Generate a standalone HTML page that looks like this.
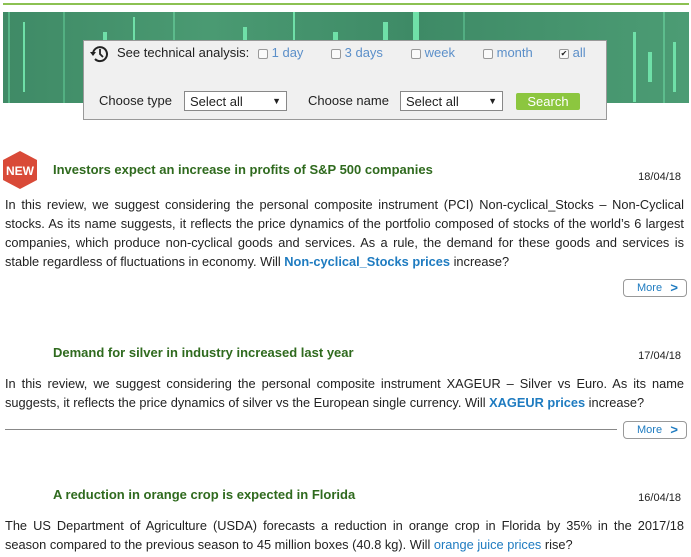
<!DOCTYPE html><html><head><style>
body{margin:0;width:691px;height:557px;background:#fff;font-family:"Liberation Sans",sans-serif;position:relative;overflow:hidden;color:#222}
.a{position:absolute}
.ban{left:3px;top:12px;width:686px;height:91px;background:linear-gradient(90deg,#3f8a66,#4a9a72 30%,#3e8a66 60%,#4c9c74);overflow:hidden}
.ban i{position:absolute;background:#6fe0a8;width:2px}
.panel{left:83px;top:40px;width:524px;height:80px;background:#f0f0f0;border:1px solid #999;box-sizing:border-box;font-size:13px}
.cb{display:inline-block;width:8px;height:8px;border:1px solid #999;background:#fafafa;border-radius:2px;vertical-align:middle}
.lk{color:#5b8fc9}
.sel{position:absolute;top:50px;width:103px;height:20px;border:1px solid #888;background:#fff;box-sizing:border-box;font-size:13px;padding:2px 5px}
.sel:after{content:"▼";position:absolute;right:5px;top:4px;font-size:9px}
.h{font-size:13px;font-weight:bold;color:#2f6a1e;left:53px}
.d{font-size:11px;right:10px}
.p{left:5px;width:679px;font-size:12.8px;line-height:19px}
.p div{text-align:justify;text-align-last:justify;white-space:nowrap}
.p div:last-child{text-align-last:left}
.p b{color:#1e7bc0}
.more{width:64px;height:18px;border:1px solid #999;border-radius:4px;box-sizing:border-box;font-size:11px;color:#1e7bc0;padding:2px 0 0 13px;left:623px}
.more span{position:absolute;right:8px;top:0px;font-weight:bold;font-size:13px}
</style></head><body>
<div class="a" style="left:3px;top:3px;width:686px;height:2px;background:#8cc152"></div>
<div class="a ban">
<i style="left:5px;top:0;height:91px;opacity:.5"></i><i style="left:20px;top:10px;height:70px"></i><i style="left:60px;top:0;height:91px;opacity:.4"></i><i style="left:100px;top:20px;height:50px;width:4px"></i><i style="left:130px;top:5px;height:40px"></i><i style="left:170px;top:0;height:91px;opacity:.5"></i><i style="left:240px;top:15px;height:40px;width:4px"></i><i style="left:290px;top:0;height:60px"></i><i style="left:330px;top:20px;height:30px;width:5px"></i><i style="left:380px;top:10px;height:40px;width:5px"></i><i style="left:410px;top:0;height:30px;width:6px"></i><i style="left:460px;top:0;height:91px;opacity:.4"></i><i style="left:630px;top:20px;height:70px;width:3px"></i><i style="left:660px;top:0;height:91px;opacity:.5"></i><i style="left:645px;top:40px;height:30px;width:4px"></i><i style="left:670px;top:30px;height:50px;width:3px"></i>
</div>
<div class="a panel">
<svg class="a" style="left:5px;top:3px" width="20" height="20" viewBox="0 0 20 20"><path d="M4 10a7 7 0 1 1 2 5" fill="none" stroke="#222" stroke-width="2"/><path d="M1 8l3 4 3-4z" fill="#222"/><path d="M11 5v5l3 3" fill="none" stroke="#222" stroke-width="1.8"/></svg>
<span class="a" style="left:33px;top:4px">See technical analysis:</span>
<span class="a" style="left:174px;top:4px"><span class="cb"></span> <span class="lk">1 day</span></span>
<span class="a" style="left:247px;top:4px"><span class="cb"></span> <span class="lk">3 days</span></span>
<span class="a" style="left:327px;top:4px"><span class="cb"></span> <span class="lk">week</span></span>
<span class="a" style="left:399px;top:4px"><span class="cb"></span> <span class="lk">month</span></span>
<span class="a" style="left:475px;top:4px"><span class="cb" style="font-size:8px;line-height:8px;text-align:center">✔</span> <span class="lk">all</span></span>
<span class="a" style="left:15px;top:52px">Choose type</span>
<div class="sel" style="left:100px">Select all</div>
<span class="a" style="left:224px;top:52px">Choose name</span>
<div class="sel" style="left:316px">Select all</div>
<div class="a" style="left:432px;top:52px;width:64px;height:17px;background:#8cc63f;color:#fff;text-align:center;font-size:13px;line-height:17px;border-radius:2px">Search</div>
</div>
<svg class="a" style="left:2px;top:151px" width="36" height="38" viewBox="0 0 36 38"><polygon points="18,0 35,9 35,29 18,38 1,29 1,9" fill="#d94a38"/><text x="18" y="24" font-size="12" font-weight="bold" fill="#fff" text-anchor="middle" font-family="Liberation Sans">NEW</text></svg>
<div class="a h" style="top:162px">Investors expect an increase in profits of S&amp;P 500 companies</div>
<div class="a d" style="top:171px">18/04/18</div>
<div class="a p" style="top:195px"><div>In this review, we suggest considering the personal composite instrument (PCI) Non-cyclical_Stocks – Non-Cyclical</div><div>stocks. As its name suggests, it reflects the price dynamics of the portfolio composed of stocks of the world’s 6 largest</div><div>companies, which produce non-cyclical goods and services. As a rule, the demand for these goods and services is</div><div>stable regardless of fluctuations in economy. Will <b>Non-cyclical_Stocks prices</b> increase?</div></div>
<div class="a more" style="top:279px">More<span>&gt;</span></div>
<div class="a h" style="top:345px">Demand for silver in industry increased last year</div>
<div class="a d" style="top:350px">17/04/18</div>
<div class="a p" style="top:374px"><div>In this review, we suggest considering the personal composite instrument XAGEUR – Silver vs Euro. As its name</div><div>suggests, it reflects the price dynamics of silver vs the European single currency. Will <b>XAGEUR prices</b> increase?</div></div>
<div class="a" style="left:5px;top:429px;width:612px;height:1px;background:#888"></div>
<div class="a more" style="top:421px">More<span>&gt;</span></div>
<div class="a h" style="top:487px">A reduction in orange crop is expected in Florida</div>
<div class="a d" style="top:492px">16/04/18</div>
<div class="a p" style="top:516px"><div>The US Department of Agriculture (USDA) forecasts a reduction in orange crop in Florida by 35% in the 2017/18</div><div>season compared to the previous season to 45 million boxes (40.8 kg). Will <b style="font-weight:normal">orange juice prices</b> rise?</div></div>
</body></html>
